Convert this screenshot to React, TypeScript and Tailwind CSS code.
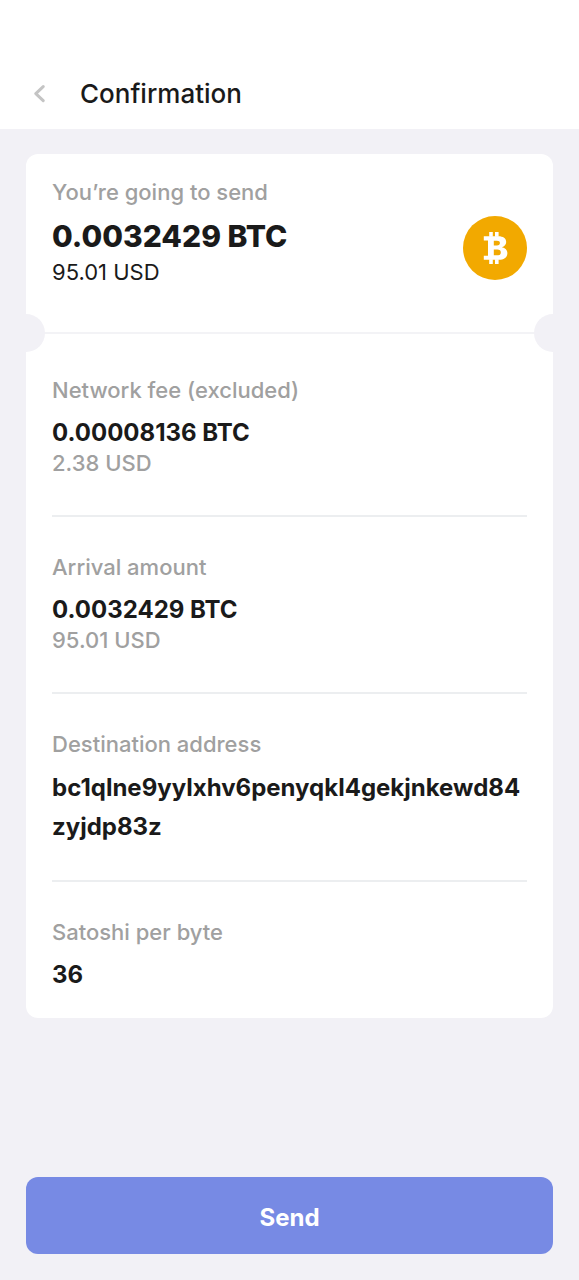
type Detail = {
  label: string;
  value: string;
  fiat?: string;
};

const DETAILS: Detail[] = [
  { label: "Network fee (excluded)", value: "0.00008136 BTC", fiat: "2.38 USD" },
  { label: "Arrival amount", value: "0.0032429 BTC", fiat: "95.01 USD" },
];

const ADDRESS = "bc1qlne9yylxhv6penyqkl4gekjnkewd84zyjdp83z";

function BitcoinIcon() {
  return (
    <svg className="w-16 h-16 mt-8 shrink-0" viewBox="0 0 64 64" role="img" aria-label="Bitcoin">
      <circle cx="32" cy="32" r="32" fill="#f2a900" />
      <path
        fill="#fff"
        d="M26.2 16h3.6v4.7h-3.6zM32 16h3.6v4.7H32zM26.2 43.2h3.6v4.8h-3.6zM32 43.2h3.6v4.8H32z"
      />
      <path
        fill="#fff"
        fillRule="evenodd"
        d="M20.8 20.3H35.3C40.2 20.3 43.2 22.4 43.2 26.1C43.2 28.8 41.4 30.5 38.9 31.2C42.2 31.8 44.4 33.8 44.4 37C44.4 41.4 41.2 43.8 35.8 43.8H20.8V39.7H25V24.4H20.8zM30.8 24.8V29.4H33.9C36 29.4 36.9 28.6 36.9 27C36.9 25.5 36 24.8 33.9 24.8zM30.8 33.6V39.3H34.2C36.7 39.3 37.8 38.3 37.8 36.4C37.8 34.5 36.7 33.6 34.2 33.6z"
      />
    </svg>
  );
}

export default function App() {
  return (
    <div className="min-h-screen flex flex-col bg-[#f2f1f6] font-['Inter',sans-serif] text-[#1a1a1a]">
      <header className="bg-white pt-[58px] px-6 h-[129px] flex items-center gap-6">
        <button type="button" aria-label="Back" className="w-8 h-10 flex items-center justify-center text-[#c4c4c4]">
          <svg className="w-3 h-5" viewBox="0 0 12 20" fill="none" stroke="currentColor">
            <path d="M9.2 2.6L1.8 9.6l7.4 7" strokeWidth={3} strokeLinecap="round" strokeLinejoin="round" />
          </svg>
        </button>
        <h1 className="text-[26px] leading-9 font-medium">Confirmation</h1>
      </header>

      <main className="flex-1 flex flex-col px-[26px] pt-[25px] pb-[26px]">
        <section className="bg-white rounded-xl overflow-hidden">
          {/* Summary */}
          <div className="flex items-center justify-between px-[26px] pt-6 pb-[46px]">
            <div>
              <p className="text-[22px] leading-7 font-medium text-[#a0a0a0]">You’re going to send</p>
              <p className="mt-3 text-[30px] leading-9 font-extrabold">0.0032429 BTC</p>
              <p className="mt-1 text-[22px] leading-7">95.01 USD</p>
            </div>
            <BitcoinIcon />
          </div>

          {/* Ticket notches */}
          <div className="relative h-0.5 bg-[#f3f3f6]">
            <span className="absolute -left-[19px] -top-[18px] w-[38px] h-[38px] rounded-full bg-[#f2f1f6]" />
            <span className="absolute -right-[19px] -top-[18px] w-[38px] h-[38px] rounded-full bg-[#f2f1f6]" />
          </div>

          <dl className="px-[26px] pt-[6px]">
            {DETAILS.map((item) => (
              <div key={item.label} className="pt-9 pb-[38px] border-b-2 border-[#eceef0]">
                <dt className="text-[22px] leading-7 font-medium text-[#a0a0a0]">{item.label}</dt>
                <dd className="mt-[13px] text-2xl leading-8 font-bold">{item.value}</dd>
                <dd className="text-[22px] leading-7 font-medium text-[#a0a0a0]">{item.fiat}</dd>
              </div>
            ))}
            <div className="pt-9 pb-[34px] border-b-2 border-[#eceef0]">
              <dt className="text-[22px] leading-7 font-medium text-[#a0a0a0]">Destination address</dt>
              <dd className="mt-[10px] text-2xl leading-[39px] font-bold break-all">{ADDRESS}</dd>
            </div>
            <div className="pt-9 pb-[27px]">
              <dt className="text-[22px] leading-7 font-medium text-[#a0a0a0]">Satoshi per byte</dt>
              <dd className="mt-[13px] text-2xl leading-8 font-bold">36</dd>
            </div>
          </dl>
        </section>

        <button
          type="button"
          className="mt-auto h-[77px] w-full pt-1 rounded-xl bg-[#778ae4] text-2xl leading-8 font-bold text-white"
        >
          Send
        </button>
      </main>
    </div>
  );
}
